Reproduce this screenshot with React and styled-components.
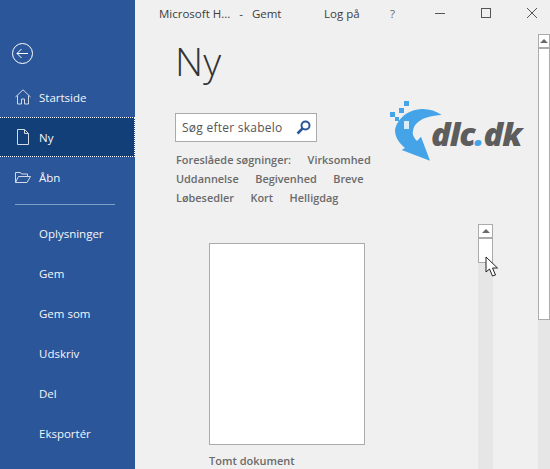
import React from "react";
import styled, { createGlobalStyle } from "styled-components";

const Global = createGlobalStyle`
  html, body {
    margin: 0;
    padding: 0;
    height: 100%;
    overflow: hidden;
    background: #f0f0f0;
  }
  #root {
    height: 100%;
  }
`;

const Window = styled.div`
  position: relative;
  display: flex;
  width: 550px;
  height: 469px;
  overflow: hidden;
  font-family: "Open Sans", "Noto Sans", sans-serif;
  background: #f0f0f0;
`;

const Sidebar = styled.nav`
  flex: 0 0 135px;
  display: flex;
  flex-direction: column;
  padding-top: 43px;
  background: #2b579a;
  color: #fff;
`;

const BackButton = styled.div`
  display: flex;
  height: 21px;
  padding-left: 12px;
  margin-bottom: 13px;
`;

const NavRow = styled.div`
  flex: 0 0 40px;
  box-sizing: border-box;
  display: flex;
  align-items: center;
  gap: 8px;
  padding-left: ${(p) => (p.$icon ? "15px" : "39px")};
  font-size: 11.5px;
  color: #f4f6fa;
  background: ${(p) => (p.$active ? "#123f77" : "transparent")};
  border-top: ${(p) => (p.$active ? "1px dotted #fff" : "0")};
  border-bottom: ${(p) => (p.$active ? "1px dotted #fff" : "0")};
  border-right: ${(p) => (p.$active ? "1px dotted #fff" : "0")};
`;

const NavIcon = styled.svg`
  flex: 0 0 16px;
  width: 16px;
  height: 16px;
  fill: none;
  stroke: #d4d9e3;
  stroke-width: 1;
`;

const NavDivider = styled.div`
  height: 1px;
  width: 100px;
  margin: 7px 0 8px 15px;
  background: #7f9fcb;
`;

const Main = styled.main`
  flex: 1;
  display: flex;
  flex-direction: column;
  min-width: 0;
`;

const TitleBar = styled.header`
  flex: 0 0 34px;
  display: flex;
  align-items: flex-start;
  padding-top: 6px;
  box-sizing: border-box;
  padding-left: 24px;
  font-size: 11.5px;
  line-height: 16px;
  color: #3c3c3c;
`;

const AppName = styled.span`
  flex: 0 0 165px;
  white-space: pre;
`;

const SignIn = styled.span`
  flex: 0 0 66px;
`;

const Help = styled.span`
  flex: 0 0 44px;
  color: #666;
`;

const WindowButton = styled.svg`
  flex: 0 0 12px;
  width: 12px;
  height: 12px;
  margin: 1px 34px 0 0;
  fill: none;
  stroke: #555;
  stroke-width: 1;
`;

const Body = styled.div`
  flex: 1;
  display: flex;
  min-height: 0;
`;

const Content = styled.div`
  flex: 0 0 343px;
  box-sizing: border-box;
  padding-left: 41px;
`;

const Title = styled.h1`
  margin: 0 0 0 -1px;
  height: 55px;
  font-size: 39px;
  line-height: 54px;
  font-weight: 300;
  color: #333;
`;

const SearchBox = styled.div`
  box-sizing: border-box;
  display: flex;
  align-items: center;
  justify-content: space-between;
  width: 142px;
  height: 29px;
  margin: 24px 0 0 -1px;
  padding: 0 5px 0 6px;
  background: #fff;
  border: 1px solid #ababab;
  font-size: 12px;
  letter-spacing: 0.25px;
  color: #555;
  white-space: nowrap;
`;

const SearchIcon = styled.svg`
  flex: 0 0 15px;
  width: 15px;
  height: 15px;
  fill: none;
  stroke: #2b579a;
  stroke-width: 2;
`;

const Suggestions = styled.div`
  margin-top: 8px;
  display: flex;
  flex-direction: column;
`;

const SuggestionRow = styled.div`
  display: flex;
  gap: 16.5px;
  height: 19px;
  align-items: center;
  font-size: 10.9px;
  font-weight: 600;
  color: #6a6a6a;
  white-space: nowrap;
`;

const Template = styled.div`
  margin: 36px 0 0 33px;
  width: 156px;
`;

const TemplateThumb = styled.div`
  box-sizing: border-box;
  height: 202px;
  background: #fff;
  border: 1px solid #ababab;
`;

const TemplateName = styled.div`
  margin-top: 8px;
  font-size: 11px;
  line-height: 16px;
  font-weight: 600;
  color: #6a6a6a;
`;

const ScrollTrack = styled.div`
  display: flex;
  flex-direction: column;
  background: #e6e6e6;
`;

const GalleryTrack = styled(ScrollTrack)`
  flex: 0 0 15px;
  margin-top: 190px;
`;

const PageTrack = styled(ScrollTrack)`
  flex: 0 0 12px;
  margin-left: 45px;
`;

const ScrollButton = styled.div`
  box-sizing: border-box;
  display: flex;
  align-items: center;
  justify-content: center;
  height: ${(p) => p.$h}px;
  background: #fff;
  border: 1px solid #ababab;
  border-bottom-width: 2px;
  &::before {
    content: "";
    border-left: 4px solid transparent;
    border-right: 4px solid transparent;
    border-bottom: 4px solid #6a6a6a;
  }
`;

const ScrollThumb = styled.div`
  box-sizing: border-box;
  height: ${(p) => p.$h}px;
  background: #fff;
  border: 1px solid #ababab;
  border-top: 0;
`;

const Logo = styled.div`
  position: absolute;
  left: 388px;
  top: 100px;
  width: 140px;
  height: 62px;
`;

const LogoMark = styled.svg`
  position: absolute;
  left: 0;
  top: 0;
  width: 60px;
  height: 62px;
`;

const LogoText = styled.div`
  position: absolute;
  left: 43px;
  top: 11px;
  font-size: 32.5px;
  line-height: 46px;
  font-weight: 800;
  font-style: italic;
  letter-spacing: -1px;
  color: #5d5d5d;
  white-space: nowrap;
`;

const LogoDot = styled.span`
  color: #45a3e8;
`;

const Cursor = styled.svg`
  position: absolute;
  left: 485px;
  top: 256px;
  width: 15px;
  height: 22px;
`;

const navItems = ["Oplysninger", "Gem", "Gem som", "Udskriv", "Del", "Eksportér"];

const suggestions = [
  ["Foreslåede søgninger:", "Virksomhed"],
  ["Uddannelse", "Begivenhed", "Breve"],
  ["Løbesedler", "Kort", "Helligdag"],
];

export default function App() {
  return (
    <Window>
      <Global />
      <Sidebar>
        <BackButton>
          <svg width="21" height="21" viewBox="0 0 21 21" fill="none" stroke="#fff" strokeWidth="1">
            <circle cx="10.5" cy="10.5" r="10" />
            <path d="M5 10.5h11M9.5 6L5 10.5L9.5 15" />
          </svg>
        </BackButton>
        <NavRow $icon>
          <NavIcon viewBox="0 0 16 16">
            <path d="M.5 8L8 .8 15.5 8M2.5 6.500v8.500h4V10h3v5h4V6.500" />
          </NavIcon>
          Startside
        </NavRow>
        <NavRow $icon $active>
          <NavIcon viewBox="0 0 16 16">
            <path d="M2.500.5h7l4 4v11h-11zM9.500.5v4h4" />
          </NavIcon>
          Ny
        </NavRow>
        <NavRow $icon>
          <NavIcon viewBox="0 0 16 16">
            <path d="M.5 13.500v-10h5l1 1.500h6v2.500M.5 13.500h11.500l3.500-6H3.500z" />
          </NavIcon>
          Åbn
        </NavRow>
        <NavDivider />
        {navItems.map((item) => (
          <NavRow key={item}>{item}</NavRow>
        ))}
      </Sidebar>

      <Main>
        <TitleBar>
          <AppName>Microsoft H...   -   Gemt</AppName>
          <SignIn>Log på</SignIn>
          <Help>?</Help>
          <WindowButton viewBox="0 0 12 12">
            <path d="M1 6.500h10" />
          </WindowButton>
          <WindowButton viewBox="0 0 12 12">
            <rect x="1.500" y="1.500" width="9" height="9" />
          </WindowButton>
          <WindowButton viewBox="0 0 12 12">
            <path d="M1 1l10 10M11 1L1 11" />
          </WindowButton>
        </TitleBar>
        <Body>
          <Content>
            <Title>Ny</Title>
            <SearchBox>
              Søg efter skabelo
              <SearchIcon viewBox="0 0 15 15">
                <circle cx="9.500" cy="5.500" r="4" />
                <path d="M6.500 8.500L1.500 13.500" strokeWidth="2.500" />
              </SearchIcon>
            </SearchBox>
            <Suggestions>
              {suggestions.map((row) => (
                <SuggestionRow key={row[0]}>
                  {row.map((word) => (
                    <span key={word}>{word}</span>
                  ))}
                </SuggestionRow>
              ))}
            </Suggestions>
            <Template>
              <TemplateThumb />
              <TemplateName>Tomt dokument</TemplateName>
            </Template>
          </Content>
          <GalleryTrack>
            <ScrollButton $h={15} />
            <ScrollThumb $h={24} />
          </GalleryTrack>
          <PageTrack>
            <ScrollButton $h={15} />
            <ScrollThumb $h={271} />
          </PageTrack>
        </Body>
      </Main>

      <Logo>
        <LogoMark viewBox="0 0 60 62">
          <g fill="#45a3e8">
            <rect x="16" y="1" width="5" height="5" />
            <rect x="11" y="8" width="5" height="5" />
            <rect x="2" y="12" width="5" height="5" />
            <rect x="7" y="17" width="4" height="4" />
            <path d="M53.700 15C45 9 33 7 22 11.700C14 15 8 23 7 30C7 37 11 43 17 48L13.700 50L42 60.700L33 36.700L29 41C25 37 24 33 25.300 30C26 24 33 16 53.700 15Z" />
          </g>
          <rect x="16" y="15" width="5" height="5" fill="#45a3e8" />
          <rect x="16" y="21" width="5" height="8" fill="#d9ecfa" />
        </LogoMark>
        <LogoText>
          dlc<LogoDot>.</LogoDot>dk
        </LogoText>
      </Logo>

      <Cursor viewBox="0 0 15 22">
        <path d="M1 1v15l3.500-3 3 7 3-1-3-7h5z" fill="#fff" stroke="#222" strokeWidth="1" />
      </Cursor>
    </Window>
  );
}
